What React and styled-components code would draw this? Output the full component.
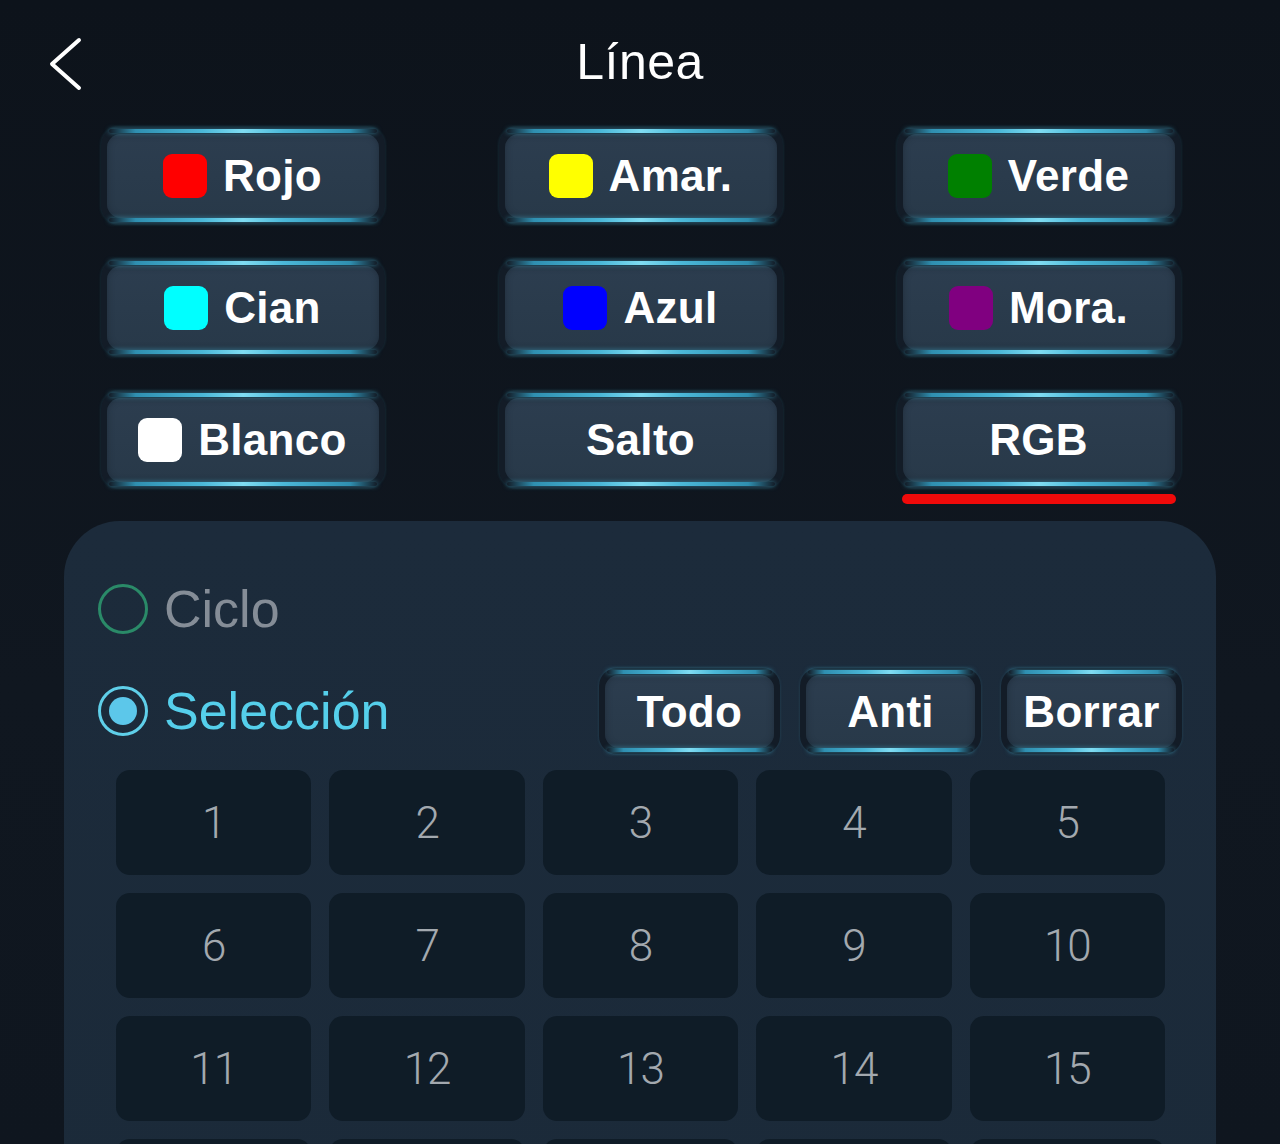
import React from "react";
import styled, { createGlobalStyle } from "styled-components";

const Global = createGlobalStyle`
  html, body { margin: 0; padding: 0; background: #0e141c; }
  body { width: 1280px; height: 1144px; overflow: hidden; font-family: "Liberation Sans", Arial, sans-serif; }
  #root { width: 1280px; height: 1144px; overflow: hidden; }
`;

const Page = styled.div`
  width: 1280px;
  height: 1144px;
  background: linear-gradient(180deg, #0d131b 0%, #101720 60%, #0f161f 100%);
  display: flex;
  flex-direction: column;
  overflow: hidden;
  & > * { flex: none; }
`;

const Header = styled.div`
  position: relative;
  height: 124px;
  display: flex;
  align-items: center;
  justify-content: center;
`;

const BackButton = styled.button`
  position: absolute;
  left: 40px;
  top: 35px;
  width: 48px;
  height: 58px;
  background: none;
  border: none;
  padding: 0;
  display: flex;
  align-items: center;
  justify-content: center;
`;

const Title = styled.h1`
  margin: 0;
  font-family: "Liberation Sans", Arial, sans-serif;
  font-weight: 400;
  font-size: 50px;
  line-height: 1;
  color: #ffffff;
  letter-spacing: 0.5px;
`;

const ColorGrid = styled.div`
  margin-top: 3px;
  display: grid;
  grid-template-columns: repeat(3, 284px);
  column-gap: 114px;
  row-gap: 35px;
  justify-content: center;
  align-items: start;
  padding-left: 1px;
`;

const Cell = styled.div`
  display: flex;
  flex-direction: column;
`;

const GlowButton = styled.div`
  position: relative;
  box-sizing: border-box;
  width: ${(p) => p.$w || 284}px;
  height: ${(p) => p.$h || 97}px;
  padding: 7px 6px 6px 6px;
  border-radius: 18px;
  background: #131c27;
  box-shadow: 0 0 3px rgba(60, 150, 180, 0.25);
  &::before, &::after {
    content: "";
    position: absolute;
    left: 8px;
    right: 8px;
    height: 4px;
    border-radius: 2px;
    background: linear-gradient(90deg, rgba(40,120,150,0) 0%, #2f8fb0 10%, #4bb8d8 35%, #7fdcf2 50%, #4bb8d8 65%, #2f8fb0 90%, rgba(40,120,150,0) 100%);
    box-shadow: 0 0 5px rgba(80, 200, 235, 0.55);
  }
  &::before { top: 2px; }
  &::after { bottom: 2px; }
`;

const ButtonBody = styled.div`
  height: 100%;
  border-radius: 14px;
  background: linear-gradient(180deg, #2c3d4f 0%, #283949 100%);
  box-shadow: inset 0 0 6px rgba(20, 30, 40, 0.5);
  display: flex;
  align-items: center;
  justify-content: center;
  gap: 16px;
  color: #ffffff;
  font-family: "Liberation Sans", Arial, sans-serif;
  font-weight: 700;
  font-size: 44px;
  letter-spacing: 0.3px;
`;

const Swatch = styled.span`
  width: 44px;
  height: 44px;
  border-radius: 9px;
  background: ${(p) => p.$c};
  flex: none;
`;

const Underline = styled.div`
  margin: 6px 5px 0 5px;
  height: 10px;
  border-radius: 5px;
  background: #f00a0a;
`;

const Panel = styled.div`
  margin: 17px 64px 0 64px;
  height: 700px;
  border-radius: 56px 56px 0 0;
  background: linear-gradient(180deg, #1c2b3b 0%, #1b2a39 100%);
  padding-top: 48px;
  display: flex;
  flex-direction: column;
`;

const RadioRow = styled.div`
  display: flex;
  align-items: center;
  height: ${(p) => p.$h}px;
  padding: 0 34px;
  margin-bottom: ${(p) => p.$mb || 0}px;
  flex: none;
`;

const Radio = styled.span`
  box-sizing: border-box;
  width: 50px;
  height: 50px;
  border-radius: 50%;
  border: 3px solid ${(p) => (p.$on ? "#5fcfe9" : "#2a8a68")};
  display: flex;
  align-items: center;
  justify-content: center;
  flex: none;
  &::after {
    content: "";
    display: ${(p) => (p.$on ? "block" : "none")};
    width: 28px;
    height: 28px;
    border-radius: 50%;
    background: #5cc7ea;
  }
`;

const RadioLabel = styled.span`
  margin-left: 16px;
  font-family: "Liberation Sans", Arial, sans-serif;
  font-size: 52px;
  font-weight: 400;
  color: ${(p) => (p.$on ? "#55cfeb" : "#858d97")};
`;

const ActionGroup = styled.div`
  margin-left: auto;
  display: flex;
  gap: 20px;
`;

const NumberGrid = styled.div`
  margin-top: 16px;
  padding: 0 51px 0 52px;
  display: grid;
  grid-template-columns: repeat(5, 1fr);
  column-gap: 18px;
  row-gap: 18px;
  flex: none;
`;

const NumCell = styled.div`
  height: 105px;
  border-radius: 14px;
  background: #0f1c27;
  display: flex;
  align-items: center;
  justify-content: center;
  font-family: Roboto, "Liberation Sans", Arial, sans-serif;
  font-weight: 300;
  font-size: 44px;
  line-height: 1;
  color: #a3a9af;
  letter-spacing: -1px;
`;

const colors = [
  { name: "Rojo", c: "#ff0000" },
  { name: "Amar.", c: "#ffff00" },
  { name: "Verde", c: "#008000" },
  { name: "Cian", c: "#00ffff" },
  { name: "Azul", c: "#0000ff" },
  { name: "Mora.", c: "#800080" },
  { name: "Blanco", c: "#ffffff" },
  { name: "Salto" },
  { name: "RGB", selected: true },
];

export default function App() {
  return (
    <>
      <Global />
      <Page>
        <Header>
          <BackButton aria-label="back">
            <svg width="40" height="56" viewBox="0 0 40 56">
              <polyline points="35,4 8,28 35,52" fill="none" stroke="#ffffff" strokeWidth="4" strokeLinecap="round" strokeLinejoin="round" />
            </svg>
          </BackButton>
          <Title>Línea</Title>
        </Header>
        <ColorGrid>
          {colors.map((item) => (
            <Cell key={item.name}>
              <GlowButton>
                <ButtonBody>
                  {item.c && <Swatch $c={item.c} />}
                  <span>{item.name}</span>
                </ButtonBody>
              </GlowButton>
              {item.selected && <Underline />}
            </Cell>
          ))}
        </ColorGrid>
        <Panel>
          <RadioRow $h={80} $mb={19}>
            <Radio />
            <RadioLabel>Ciclo</RadioLabel>
          </RadioRow>
          <RadioRow $h={86}>
            <Radio $on />
            <RadioLabel $on>Selección</RadioLabel>
            <ActionGroup>
              {["Todo", "Anti", "Borrar"].map((t) => (
                <GlowButton key={t} $w={181} $h={86}>
                  <ButtonBody>{t}</ButtonBody>
                </GlowButton>
              ))}
            </ActionGroup>
          </RadioRow>
          <NumberGrid>
            {Array.from({ length: 20 }, (_, i) => (
              <NumCell key={i}>{i + 1}</NumCell>
            ))}
          </NumberGrid>
        </Panel>
      </Page>
    </>
  );
}
